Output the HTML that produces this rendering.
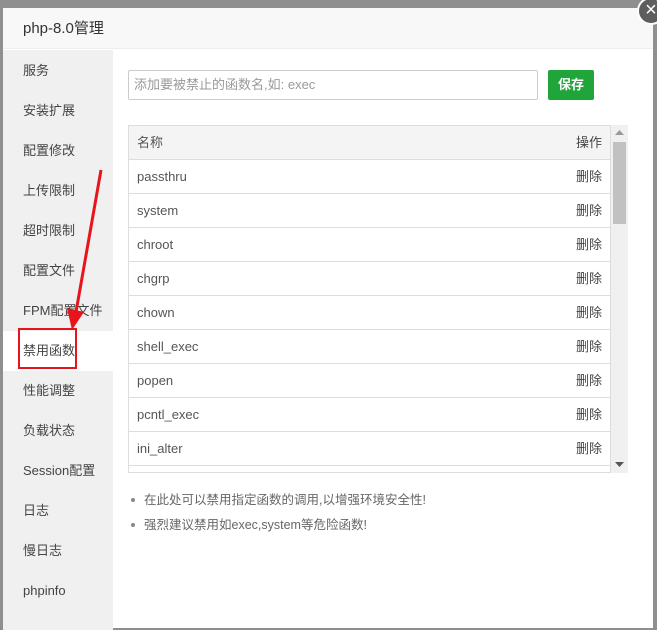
<!DOCTYPE html>
<html><head><meta charset="utf-8"><style>
*{margin:0;padding:0;box-sizing:border-box}
body{width:657px;height:607px;overflow:hidden;background:#8f8f8f;font-family:"Liberation Sans","Noto Sans CJK SC",sans-serif;position:relative}
.dlg{position:absolute;left:3px;top:8px;width:650px;height:620px;background:#fff}
.title{height:41px;background:#f8f8f8;border-bottom:1px solid #eee;font-size:15px;color:#333;line-height:42px;padding-left:20px}
.side{position:absolute;left:0;top:42px;width:110px;height:580px;background:#f0f0f0;padding-top:1px}
.side div{height:40px;line-height:40px;padding-left:20px;font-size:13px;color:#444}
.side div.on{background:#fff}
.inp{position:absolute;left:125px;top:62px;width:410px;height:30px;border:1px solid #ccc;border-radius:2px;font-size:13px;color:#999;line-height:28px;padding-left:5px}
.btn{position:absolute;left:545px;top:62px;width:46px;height:30px;background:#20a53a;border-radius:2px;color:#fff;font-size:13px;font-weight:bold;text-align:center;line-height:30px}
.tbl{position:absolute;left:125px;top:117px;width:483px;height:348px;border:1px solid #ddd;overflow:hidden}
.tbl div{height:34px;border-bottom:1px solid #ddd;line-height:34px;font-size:13px;color:#555;padding:0 8px;display:flex;justify-content:space-between}
.tbl div.h{background:#f4f4f4}
.tbl span{color:#444}
.sb{position:absolute;left:608px;top:117px;width:17px;height:348px;background:#f0f0f0}
.thumb{position:absolute;left:2px;top:17px;width:13px;height:82px;background:#c1c1c1}
.notes{position:absolute;left:128px;top:477px;font-size:12.5px;color:#666}
.notes p{height:25px;line-height:30px}
.notes p:before{content:"";display:inline-block;width:4px;height:4px;border-radius:50%;background:#888;margin:0 9px 2px 0;vertical-align:middle}
.close{position:absolute;left:637px;top:-3px;width:28px;height:28px;border-radius:50%;background:#5e5e5e;border:2px solid #fff;color:#fff;font-size:20px;text-align:center;line-height:22px}
.redbox{position:absolute;left:18px;top:328px;width:59px;height:41px;border:2px solid #e8141b}
</style></head><body>
<div class="dlg">
<div class="title">php-8.0管理</div>
<div class="side">
<div>服务</div><div>安装扩展</div><div>配置修改</div><div>上传限制</div><div>超时限制</div><div>配置文件</div><div>FPM配置文件</div><div class="on">禁用函数</div><div>性能调整</div><div>负载状态</div><div>Session配置</div><div>日志</div><div>慢日志</div><div>phpinfo</div>
</div>
<div class="inp">添加要被禁止的函数名,如: exec</div>
<div class="btn">保存</div>
<div class="tbl">
<div class="h">名称<span>操作</span></div>
<div>passthru<span>删除</span></div>
<div>system<span>删除</span></div>
<div>chroot<span>删除</span></div>
<div>chgrp<span>删除</span></div>
<div>chown<span>删除</span></div>
<div>shell_exec<span>删除</span></div>
<div>popen<span>删除</span></div>
<div>pcntl_exec<span>删除</span></div>
<div>ini_alter<span>删除</span></div>
<div>ini_restore<span>删除</span></div>
</div>
<div class="sb"><div class="thumb"></div>
<svg style="position:absolute;left:4px;top:5px" width="9" height="6"><path d="M0 5L4.5 0L9 5Z" fill="#999"/></svg>
<svg style="position:absolute;left:4px;top:337px" width="9" height="6"><path d="M0 0L4.5 5L9 0Z" fill="#555"/></svg>
</div>
<div class="notes"><p>在此处可以禁用指定函数的调用,以增强环境安全性!</p><p>强烈建议禁用如exec,system等危险函数!</p></div>
</div>
<div class="redbox"></div>
<svg style="position:absolute;left:0;top:0" width="657" height="607"><line x1="101" y1="170" x2="76" y2="312" stroke="#e8141b" stroke-width="3"/><path d="M67 308L84 312L72 330Z" fill="#e8141b"/></svg>
<div class="close">×</div>
</body></html>
